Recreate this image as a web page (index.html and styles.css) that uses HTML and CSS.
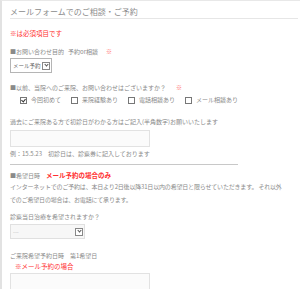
FILE: index.html
```html
<!DOCTYPE html>
<html lang="ja">
<head>
    <meta charset="UTF-8">
    <title>メールフォームでのご相談・ご予約</title>
    <link rel="stylesheet" href="styles.css">
</head>
<body>
    <div class="form-wrap">
        <h2>メールフォームでのご相談・ご予約</h2>

        <div class="body">
            <p class="required">※は必須項目です</p>

            <p class="label label-first">■お問い合わせ目的<span class="sub">予約or相談</span><span class="mark">※</span></p>
            <div class="select">
                <span class="select-text">メール予約</span>
                <span class="select-arrow"></span>
            </div>

            <p class="label label-visit">■以前、当院へのご来院、お問い合わせはございますか？<span class="mark mark-wide">※</span></p>
            <div class="checks">
                <span class="check"><span class="box checked"></span>今回初めて</span>
                <span class="check"><span class="box"></span>来院経験あり</span>
                <span class="check"><span class="box"></span>電話相談あり</span>
                <span class="check"><span class="box"></span>メール相談あり</span>
            </div>

            <p class="label label-past">過去にご来院ある方で初診日がわかる方はご記入(半角数字)お願いいたします</p>
            <div class="input"></div>
            <p class="label label-note">例：15.5.23　初診日は、診察券に記入しております</p>

            <hr class="rule">

            <p class="label label-date">■希望日時<span class="red-strong">メール予約の場合のみ</span></p>
            <p class="text">インターネットでのご予約は、本日より2日後以降31日以内の希望日と限らせていただきます。 それ以外<br>でのご希望日の場合は、お電話にて承ります。</p>

            <p class="label label-today">診察当日治療を希望されますか？</p>
            <div class="select select-wide">
                <span class="select-text">---</span>
                <span class="select-arrow"></span>
            </div>

            <p class="label label-wish">ご来院希望予約日時　第1希望日</p>
            <p class="red-note">※メール予約の場合</p>
            <div class="input input-last"></div>
        </div>
    </div>
</body>
</html>
```

FILE: styles.css
```css
body {
    margin: 0;
    font-family: "Noto Sans CJK JP", "Noto Sans", sans-serif;
    color: #8a8a8a;
    background: #fff;
}
.form-wrap {
    border-top: 1px solid #e8e8e8;
    border-left: 2px solid #e2e2e2;
    height: 288px;
    overflow: hidden;
}
h2 {
    margin: 0 2px 0 8px;
    padding: 5px 0 0 0;
    font-size: 8px;
    line-height: 12px;
    font-weight: normal;
    color: #8c8c8c;
    border-bottom: 1px solid #e6e6e6;
}
.body {
    padding-left: 8px;
}
p {
    margin: 0;
}
.required {
    margin-top: 9px;
    font-size: 6.5px;
    line-height: 10px;
    color: #ff3030;
}
.label {
    font-size: 6px;
    line-height: 10px;
    white-space: nowrap;
}
.label-first { margin-top: 9px; }
.label-visit { margin-top: 10px; }
.label-past { margin-top: 12px; }
.label-note { margin-top: 2px; }
.label-date { margin-top: 5px; }
.label-today { margin-top: 6px; }
.label-wish { margin-top: 12px; }
.sub {
    margin-left: 4px;
}
.mark {
    margin-left: 8px;
    color: #ff6a6a;
}
.mark-wide {
    margin-left: 10px;
}
.select {
    margin-top: 1px;
    width: 37px;
    height: 13px;
    border: 1px solid #b5b5b5;
    display: flex;
    align-items: center;
    justify-content: space-between;
    padding: 0 1px 0 2px;
    font-size: 5.5px;
    color: #666;
    background: #fff;
    white-space: nowrap;
}
.select-wide {
    margin-top: 2px;
    width: 70px;
    border-color: #e0e0e0;
    background: #f7f7f7;
    color: #bbb;
}
.select-arrow {
    flex: none;
    width: 6px;
    height: 6px;
    border: 1px solid #888;
    position: relative;
    background: #fff;
}
.select-arrow::after {
    content: "";
    position: absolute;
    left: 1.5px;
    top: 0px;
    width: 2px;
    height: 2px;
    border-right: 1px solid #555;
    border-bottom: 1px solid #555;
    transform: rotate(45deg);
}
.checks {
    margin-top: 2px;
    padding-left: 10px;
    display: flex;
    gap: 10px;
    font-size: 6px;
    line-height: 10px;
    white-space: nowrap;
}
.check {
    display: flex;
    align-items: center;
    gap: 4px;
}
.box {
    width: 5px;
    height: 5px;
    border: 1px solid #777;
    position: relative;
}
.box.checked::after {
    content: "";
    position: absolute;
    left: 1px;
    top: 0px;
    width: 2px;
    height: 3px;
    border-right: 1px solid #333;
    border-bottom: 1px solid #333;
    transform: rotate(40deg);
}
.input {
    margin-top: 3px;
    width: 138px;
    height: 15px;
    border: 1px solid #e2e2e2;
    background: #fbfbfb;
}
.input-last {
    margin-top: 2px;
}
.rule {
    margin: 5px 0 0 0;
    width: 228px;
    border: 0;
    border-top: 1px solid #c8c8c8;
}
.red-strong {
    margin-left: 6px;
    color: #ff3030;
    font-weight: bold;
    font-size: 6.5px;
}
.text {
    margin-top: -1px;
    font-size: 6px;
    line-height: 13px;
    white-space: nowrap;
    letter-spacing: -0.18px;
}
.red-note {
    padding-left: 5px;
    font-size: 6.5px;
    line-height: 10px;
    color: #ff3030;
}
```
